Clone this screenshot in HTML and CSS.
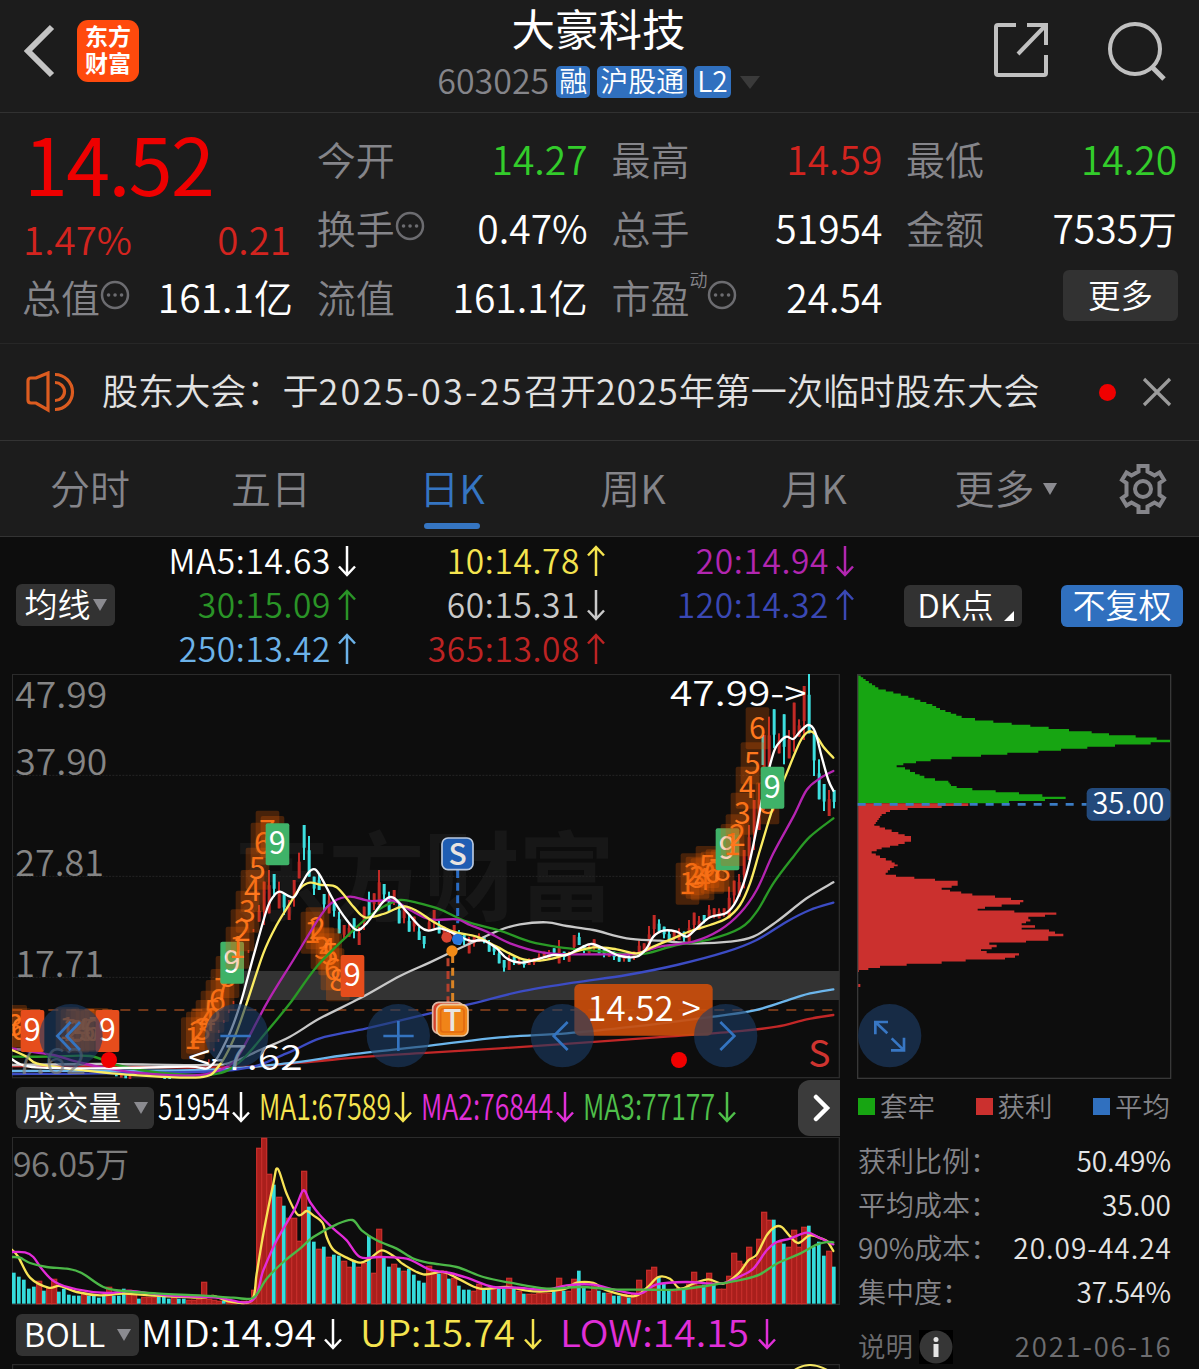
FILE: index.html
```html
<!DOCTYPE html>
<html lang="zh-CN">
<head>
    <meta charset="UTF-8">
    <title>大豪科技 603025</title>
    <link rel="stylesheet" href="styles.css">
</head>
<body>
    <svg class="defs" width="0" height="0">
        <symbol id="down" viewBox="0 0 20 32"><path d="M10 1v29M2 21.500l8 8.500 8-8.500"/></symbol>
        <symbol id="up" viewBox="0 0 20 32"><path d="M10 31V2M2 10.500L10 2l8 8.500"/></symbol>
        <symbol id="more" viewBox="0 0 30 30"><circle cx="15" cy="15" r="13"/><path d="M8.500 15h.1M15 15h.1M21.500 15h.1" stroke-width="3.500" stroke-linecap="round"/></symbol>
    </svg>

    <header class="topbar">
        <div class="topbar-left">
            <svg class="back" width="32" height="54" viewBox="0 0 32 54"><path d="M28 3L4 27l24 24"/></svg>
            <div class="logo"><span>东方</span><span>财富</span></div>
        </div>
        <div class="stock">
            <h1>大豪科技</h1>
            <div class="stock-sub">
                <span class="code">603025</span>
                <span class="tag">融</span>
                <span class="tag">沪股通</span>
                <span class="tag">L2</span>
                <span class="caret caret-dark"></span>
            </div>
        </div>
        <div class="topbar-right">
            <svg width="56" height="56" viewBox="0 0 56 56"><path d="M23 3H5a2 2 0 0 0-2 2v46a2 2 0 0 0 2 2h46a2 2 0 0 0 2-2V33M34 3h19v20M53 3L25 32"/></svg>
            <svg width="60" height="60" viewBox="0 0 60 60"><circle cx="28" cy="27" r="25"/><path d="M45 45l12 12" stroke-width="5"/></svg>
        </div>
    </header>

    <section class="quote">
        <div class="price">14.52</div>
        <div class="cell"><span>今开</span><b class="green">14.27</b></div>
        <div class="cell"><span>最高</span><b class="red">14.59</b></div>
        <div class="cell"><span>最低</span><b class="green">14.20</b></div>

        <div class="cell change"><b class="red">1.47%</b><b class="red">0.21</b></div>
        <div class="cell"><span>换手<svg class="dots"><use href="#more"/></svg></span><b>0.47%</b></div>
        <div class="cell"><span>总手</span><b>51954</b></div>
        <div class="cell"><span>金额</span><b>7535万</b></div>

        <div class="cell"><span>总值<svg class="dots"><use href="#more"/></svg></span><b>161.1亿</b></div>
        <div class="cell"><span>流值</span><b>161.1亿</b></div>
        <div class="cell"><span>市盈<sup>动</sup><svg class="dots"><use href="#more"/></svg></span><b>24.54</b></div>
        <div class="cell cell-more"><button class="more-btn">更多</button></div>
    </section>

    <section class="notice">
        <svg class="speaker" width="50" height="42" viewBox="0 0 50 42"><path d="M3 10q0-3 3-3h5L23 2v37L11 32H6q-3 0-3-3zM30 11.500a9.500 9 0 0 1 0 18M30 3.500a17.500 17.500 0 0 1 0 35"/></svg>
        <p>股东大会：于<span class="notice-date">2025-03-25</span>召开<span class="notice-year">2025</span>年第一次临时股东大会</p>
        <i class="dot"></i>
        <svg class="close" width="30" height="30" viewBox="0 0 30 30"><path d="M2 2l26 26M28 2L2 28"/></svg>
    </section>

    <nav class="tabs">
        <a>分时</a>
        <a>五日</a>
        <a class="active">日K</a>
        <a>周K</a>
        <a>月K</a>
        <a class="tab-more">更多<span class="caret caret-small"></span></a>
        <svg class="gear" width="50" height="50" viewBox="0 0 50 50"><path d="M20.500 2h9v5.500l7 4 5-3 4.500 7.500-4.500 3v12l4.500 3-4.500 7.500-5-3-7 4V48h-9v-5.500l-7-4-5 3L4 34l4.500-3V19L4 16l4.500-7.500 5 3 7-4z"/><circle cx="25" cy="25" r="8"/></svg>
    </nav>

    <section class="ma">
        <button class="pill">均线<span class="caret caret-pill"></span></button>
        <div class="ma-grid">
            <span class="c-white">MA5:14.63<svg class="arrow"><use href="#down"/></svg></span>
            <span class="c-yellow">10:14.78<svg class="arrow"><use href="#up"/></svg></span>
            <span class="c-purple">20:14.94<svg class="arrow"><use href="#down"/></svg></span>
            <span class="c-green">30:15.09<svg class="arrow"><use href="#up"/></svg></span>
            <span class="c-gray">60:15.31<svg class="arrow"><use href="#down"/></svg></span>
            <span class="c-blue">120:14.32<svg class="arrow"><use href="#up"/></svg></span>
            <span class="c-sky">250:13.42<svg class="arrow"><use href="#up"/></svg></span>
            <span class="c-red">365:13.08<svg class="arrow"><use href="#up"/></svg></span>
        </div>
        <button class="pill pill-dk">DK点<svg width="12" height="12" viewBox="0 0 12 12"><path d="M11 1v10H1z"/></svg></button>
        <button class="pill pill-blue">不复权</button>
    </section>

    <main class="charts">
        <div class="left">
            <!-- chart units are thirds of a pixel -->
            <svg class="kline" width="828" height="405" viewBox="36 12 2484 1215">
                <text class="watermark" x="700" y="730" textLength="1145">东方财富</text>
                <rect class="frame" x="37" y="13" width="2481" height="1210"/>
                <path class="grid-line" d="M37 316H2518M37 619H2518M37 922H2518"/>
                <rect x="730" y="903" width="1788" height="87" fill="#333"/>
                <path class="cost-line" d="M37 1020H2518"/>
                <g id="candles"></g>
                <g id="chips"></g>
                <g id="maLines"></g>
                <g class="axis">
                    <text x="46" y="115" textLength="276" lengthAdjust="spacingAndGlyphs">47.99</text>
                    <text x="46" y="314" textLength="276" lengthAdjust="spacingAndGlyphs">37.90</text>
                    <text x="46" y="619" textLength="266" lengthAdjust="spacingAndGlyphs">27.81</text>
                    <text x="46" y="921" textLength="266" lengthAdjust="spacingAndGlyphs">17.71</text>
                    <text x="46" y="1213" textLength="212" lengthAdjust="spacingAndGlyphs" opacity=".75">7.62</text>
                </g>
                <g id="nines"></g>
                <g class="trade">
                    <path d="M1373 600V760" stroke="#2a6cc4"/>
                    <path d="M1344 865V1000" stroke="#b5402c"/>
                    <path d="M1358 855V1000" stroke="#d98324"/>
                    <circle cx="1340" cy="802" r="16" fill="#d84432"/>
                    <circle cx="1373" cy="808" r="17" fill="#2776dc"/>
                    <circle cx="1356" cy="843" r="17" fill="#f08a16"/>
                    <rect x="1326" y="504" width="93" height="95" rx="18" fill="#1f5db3" stroke="#b9c8de" stroke-width="5"/>
                    <text x="1373" y="584">S</text>
                    <rect x="1298" y="997" width="92" height="93" rx="18" fill="#d4422c" stroke="#ddb7a6" stroke-width="5"/>
                    <rect x="1310" y="1004" width="94" height="94" rx="18" fill="#f08418" stroke="#ecc79c" stroke-width="5"/>
                    <rect x="1322" y="1016" width="70" height="70" rx="8" fill="none" stroke="#e26a10" stroke-width="5"/>
                    <text x="1357" y="1084">T</text>
                </g>
                <rect x="1723" y="942" width="415" height="155" rx="16" fill="#c94e0c" fill-opacity=".93"/>
                <text class="label" x="1762" y="1052" textLength="340" lengthAdjust="spacingAndGlyphs">14.52 &gt;</text>
                <text class="label" x="564" y="1200" textLength="344" lengthAdjust="spacingAndGlyphs">&lt;-7.62</text>
                <text class="label" x="2010" y="108" textLength="410" lengthAdjust="spacingAndGlyphs">47.99-&gt;</text>
                <g class="round-btn">
                    <circle cx="213" cy="1097" r="95"/>
                    <circle cx="710" cy="1097" r="95"/>
                    <circle cx="1195" cy="1097" r="95"/>
                    <circle cx="1687" cy="1097" r="95"/>
                    <circle cx="2177" cy="1097" r="95"/>
                    <path d="M212 1056l-40 42 40 42M240 1056l-40 42 40 42M661 1098h91M1150 1098h91M1195 1053v90M1703 1056l-42 42 42 42M2161 1056l42 42-42 42"/>
                </g>
                <circle cx="327" cy="1170" r="24" fill="#f00000"/>
                <circle cx="2037" cy="1170" r="24" fill="#f00000"/>
                <text class="s-mark" x="2425" y="1191">S</text>
            </svg>

            <div class="indicator">
                <button class="pill pill-vol">成交量<span class="caret caret-pill"></span></button>
                <svg class="values" width="600" height="42" viewBox="0 0 600 42" font-size="36">
                    <g class="c-white"><text x="3" y="35" textLength="72" lengthAdjust="spacingAndGlyphs">51954</text><use href="#down" x="76" y="5" width="20" height="34"/></g>
                    <g class="c-yellow"><text x="104" y="35" textLength="132" lengthAdjust="spacingAndGlyphs">MA1:67589</text><use href="#down" x="238" y="5" width="20" height="34"/></g>
                    <g class="c-magenta"><text x="266" y="35" textLength="132" lengthAdjust="spacingAndGlyphs">MA2:76844</text><use href="#down" x="400" y="5" width="20" height="34"/></g>
                    <g class="c-lime"><text x="428" y="35" textLength="132" lengthAdjust="spacingAndGlyphs">MA3:77177</text><use href="#down" x="562" y="5" width="20" height="34"/></g>
                </svg>
                <button class="next"><svg width="18" height="28" viewBox="0 0 18 28"><path d="M3 3l11 11L3 25"/></svg></button>
            </div>

            <svg class="volume" width="828" height="168" viewBox="36 170 2484 504">
                <rect class="frame" x="37" y="171" width="2481" height="501"/>
                <text class="vol-max" x="38" y="290" textLength="350">96.05万</text>
                <g id="volBars"></g>
                <g id="volLines"></g>
            </svg>

            <div class="indicator indicator-boll">
                <button class="pill pill-boll">BOLL<span class="caret caret-pill"></span></button>
                <svg class="values" width="680" height="42" viewBox="0 0 680 42" font-size="37">
                    <g class="c-white"><text x="1" y="34" textLength="175" lengthAdjust="spacingAndGlyphs">MID:14.94</text><use href="#down" x="183" y="4" width="20" height="34"/></g>
                    <g class="c-yellow"><text x="220" y="34" textLength="155" lengthAdjust="spacingAndGlyphs">UP:15.74</text><use href="#down" x="383" y="4" width="20" height="34"/></g>
                    <g class="c-magenta"><text x="420" y="34" textLength="189" lengthAdjust="spacingAndGlyphs">LOW:14.15</text><use href="#down" x="617" y="4" width="20" height="34"/></g>
                </svg>
            </div>
            <svg class="boll" width="828" height="7" viewBox="0 0 828 7"><path class="boll-frame" d="M.5 7V.5H827.500V7"/><path d="M781 7Q797 -5 817 7" fill="none" stroke="#f5e663" stroke-width="2"/></svg>
        </div>

        <aside class="right">
            <svg class="cost" width="315" height="405" viewBox="36 27 945 1215">
                <path id="costUp" fill="#17a512"/>
                <path id="costDown" fill="#cb302e"/>
                <rect x="38" y="957" width="8" height="9" fill="#cb302e"/>
                <rect class="cost-frame" x="38" y="29" width="939" height="1211"/>
                <path d="M38 418H725" stroke="#3b7cc4" stroke-width="8" stroke-dasharray="24 24"/>
                <rect x="725" y="369" width="251" height="98" rx="16" fill="#234a7c"/>
                <text x="742" y="448" textLength="216">35.00</text>
                <circle cx="134" cy="1112" r="95" fill="#172b45"/>
                <path class="expand" d="M91 1108V1071H129M91 1071L127 1105M138 1156H177V1118M177 1156L140 1120"/>
            </svg>
            <div class="legend">
                <span><i class="sq sq-green"></i>套牢</span>
                <span><i class="sq sq-red"></i>获利</span>
                <span><i class="sq sq-blue"></i>平均</span>
            </div>
            <dl class="stats">
                <div><dt>获利比例：</dt><dd>50.49%</dd></div>
                <div><dt>平均成本：</dt><dd>35.00</dd></div>
                <div><dt>90%成本：</dt><dd class="range">20.09-44.24</dd></div>
                <div><dt>集中度：</dt><dd>37.54%</dd></div>
            </dl>
            <div class="footnote">
                <span>说明</span>
                <svg width="34" height="34" viewBox="0 0 34 34"><rect width="34" height="34" fill="#000"/><circle cx="17" cy="17" r="16.500" fill="#363636"/><path d="M17 14v13" stroke="#e6e6e6" stroke-width="5"/><circle cx="17" cy="9.500" r="2.500" fill="#e6e6e6"/></svg>
                <span class="date">2021-06-16</span>
            </div>
        </aside>
    </main>

    <script src="script.js"></script>
</body>
</html>
```
FILE: styles.css
```css
* {
    margin: 0;
    padding: 0;
    box-sizing: border-box;
}

body {
    width: 1199px;
    height: 1369px;
    overflow: hidden;
    background: #0d0d0d;
    color: #fff;
    font-family: "Noto Sans CJK SC", "Noto Sans", sans-serif;
    font-weight: 350;
}

button {
    border: none;
    color: #fff;
    font: inherit;
}

svg {
    display: block;
    flex: none;
}

.defs {
    position: absolute;
}

.red { color: #d3241f; }
.green { color: #33cc2b; }
.c-white { color: #fff; }
.c-yellow { color: #f5e44f; }
.c-purple { color: #b226b0; }
.c-green { color: #2a9427; }
.c-gray { color: #c9c9c9; }
.c-blue { color: #3a48b4; }
.c-sky { color: #6cb2e8; }
.c-red { color: #bd2323; }
.c-magenta { color: #e02fd8; }
.c-lime { color: #4fc04a; }

.caret {
    display: inline-block;
    border-left: 7px solid transparent;
    border-right: 7px solid transparent;
    border-top: 12px solid #8b8b90;
}

.caret-dark {
    margin-left: 2px;
    border-left-width: 10px;
    border-right-width: 10px;
    border-top: 13px solid #3a3a3a;
}

.caret-small {
    margin-left: 8px;
}

/* top bar */
.topbar {
    display: grid;
    grid-template-columns: 1fr auto 1fr;
    height: 113px;
    padding: 0 32px 0 24px;
    background: #1c1c1c;
    border-bottom: 1px solid #313131;
}

.topbar-left {
    display: flex;
    gap: 21px;
    padding-top: 20px;
}

.back {
    margin-top: 4px;
    fill: none;
    stroke: #c4c4c4;
    stroke-width: 6;
}

.logo {
    display: flex;
    flex-direction: column;
    align-items: center;
    justify-content: center;
    width: 62px;
    height: 62px;
    padding-bottom: 5px;
    border-radius: 11px;
    background: #ff4a0d;
    font-size: 23px;
    font-weight: 700;
    line-height: 27px;
}

.stock {
    display: flex;
    flex-direction: column;
    align-items: center;
    padding-left: 6px;
}

.stock h1 {
    height: 64px;
    font-size: 43.5px;
    font-weight: 400;
    line-height: 56px;
}

.stock-sub {
    display: flex;
    align-items: center;
    gap: 7px;
    height: 36px;
}

.code {
    margin-top: -5px;
    font-size: 34px;
    color: #85858a;
    line-height: 36px;
}

.tag {
    height: 32px;
    padding: 0 3px;
    border-radius: 5px;
    background: #3070bf;
    font-size: 28px;
    line-height: 29px;
}

.topbar-right {
    display: flex;
    justify-content: flex-end;
    gap: 58px;
    padding-top: 22px;
    fill: none;
    stroke: #c0c0c0;
    stroke-width: 4;
}

/* quote */
.quote {
    display: grid;
    grid-template-columns: repeat(4, 271px);
    grid-auto-rows: 69px;
    column-gap: 23.7px;
    height: 231px;
    padding: 10px 22px 0 22px;
    background: #1c1c1c;
    border-bottom: 1px solid #272727;
}

.price {
    padding: 4px 0 0 2px;
    font-size: 79px;
    font-weight: 400;
    line-height: 69px;
    letter-spacing: -1.6px;
    color: #ee0000;
}

.cell {
    display: flex;
    justify-content: space-between;
    align-items: center;
    font-size: 39px;
    line-height: 60px;
}

.cell span {
    display: flex;
    align-items: center;
    color: #85858a;
}

.cell b {
    font-weight: inherit;
}

.change {
    padding: 22px 2px 0 1px;
    font-size: 38.5px;
}

.dots {
    width: 30px;
    height: 30px;
    margin-bottom: 1px;
    fill: none;
    stroke: #6c6c70;
    stroke-width: 2.5;
}

.cell sup {
    align-self: flex-start;
    margin: -2px 0 0 0;
    font-size: 18px;
    line-height: 30px;
}

.cell-more {
    justify-content: flex-end;
}

.more-btn {
    width: 115px;
    height: 51px;
    margin: 0 -1px 0 0;
    padding-bottom: 4px;
    border-radius: 6px;
    background: #323232;
    font-size: 32.5px;
    line-height: 45px;
}

/* notice */
.notice {
    display: flex;
    align-items: center;
    height: 97px;
    padding: 0 27px 0 25px;
    background: #1c1c1c;
    border-bottom: 1px solid #333;
}

.speaker {
    fill: none;
    stroke: #dc5c20;
    stroke-width: 3.2;
}

.notice p {
    flex: 1;
    margin: -6px 0 0 27px;
    font-size: 36.1px;
    color: #e2e2e2;
    white-space: nowrap;
}

.notice-date {
    letter-spacing: 2.2px;
}

.notice-year {
    letter-spacing: .9px;
}

.dot {
    width: 17px;
    height: 17px;
    margin-right: 26px;
    border-radius: 50%;
    background: #f00000;
}

.close {
    stroke: #9b9b9b;
    stroke-width: 3.2;
}

/* tabs */
.tabs {
    display: flex;
    align-items: center;
    height: 96px;
    background: #1c1c1c;
    border-bottom: 1px solid #333;
}

.tabs a {
    display: flex;
    flex-direction: column;
    align-items: center;
    width: 181px;
    height: 95px;
    padding: 16px 1px 0 0;
    font-size: 40px;
    line-height: 60px;
    color: #85858a;
}

.tabs .active {
    color: #3575c2;
}

.active::after {
    content: "";
    width: 56px;
    height: 6px;
    margin-top: 6px;
    border-radius: 3px;
    background: #3575c2;
}

.tabs .tab-more {
    flex-direction: row;
    justify-content: center;
    align-items: flex-start;
    width: 201px;
    padding-right: 0;
}

.tab-more .caret {
    margin-top: 26px;
}

.gear {
    margin-left: 12px;
    fill: none;
    stroke: #85858a;
    stroke-width: 4;
}

/* moving averages */
.ma {
    display: flex;
    height: 137px;
    padding: 2px 16px 0;
}

.ma-grid {
    display: grid;
    grid-template-columns: 237px 249px 249px;
    grid-auto-rows: 44px;
    margin: -1px 49px 0 5px;
}

.ma-grid span {
    display: flex;
    justify-content: flex-end;
    align-items: center;
    font-size: 33.5px;
    line-height: 44px;
    letter-spacing: .6px;
}

.arrow {
    width: 20px;
    height: 32px;
    margin: 2px 0 0 6px;
}

.arrow, .values use {
    fill: none;
    stroke: currentColor;
    stroke-width: 2.5;
}

.pill {
    display: flex;
    align-items: center;
    justify-content: center;
    width: 99px;
    height: 42px;
    padding-bottom: 4px;
    border-radius: 6px;
    background: #323232;
    font-size: 33px;
    line-height: 38px;
    white-space: nowrap;
}

.ma .pill {
    margin-top: 45px;
}

.ma .pill-dk {
    width: 118px;
    margin-top: 46px;
    margin-right: 39px;
}

.pill-dk svg {
    margin: 23px -6px 0 9px;
    fill: #fff;
}

.ma .pill-blue {
    width: 122px;
    margin-top: 46px;
    background: #3070bf;
}

.caret-pill {
    margin: 4px 0 0 2px;
}

/* charts */
.charts {
    display: flex;
    gap: 17px;
    padding-left: 12px;
}

.left {
    width: 828px;
}

svg text {
    fill: currentColor;
}

.frame, .boll-frame {
    fill: none;
    stroke: #2b2b2b;
    stroke-width: 4;
}

.boll-frame {
    stroke-width: 1.5;
}

.grid-line {
    stroke: #252525;
    stroke-width: 3;
    stroke-dasharray: 6 4;
}

.kline .watermark {
    font-size: 290px;
    font-weight: 700;
    fill: #171717;
}

.kline .axis text {
    font-size: 107px;
    fill: #858585;
}

.cost-line {
    stroke: #93451c;
    stroke-width: 4;
    stroke-dasharray: 30 24;
}

.kline .label {
    font-size: 104px;
}

.chip text {
    font-size: 90px;
    font-weight: 400;
    text-anchor: middle;
    fill: #ff781e;
}

.chip rect {
    fill: #e65c05;
    fill-opacity: .27;
}

.nine text {
    font-size: 92px;
    font-weight: 400;
    text-anchor: middle;
}

.trade path {
    stroke-width: 9;
    stroke-dasharray: 24 14;
}

.trade text {
    font-size: 90px;
    font-weight: 500;
    text-anchor: middle;
    fill: #e9e4e0;
}

.round-btn circle {
    fill: #1b3c66;
    fill-opacity: .6;
}

.round-btn path {
    fill: none;
    stroke: #3474c0;
    stroke-width: 8;
}

.kline .s-mark {
    font-size: 112px;
    font-weight: 400;
    fill: #cf3430;
}

.ma-line {
    fill: none;
    stroke-width: 7;
    stroke-linecap: round;
}

.indicator {
    display: flex;
    align-items: center;
    height: 58px;
    padding-left: 4px;
}

.pill-vol {
    width: 138px;
}

.pill-vol .caret, .pill-boll .caret {
    margin-left: 12px;
}

.indicator .values {
    margin: -5px auto 0 1px;
}

.next {
    display: flex;
    align-items: center;
    justify-content: center;
    width: 42px;
    height: 56px;
    border-radius: 12px 0 0 12px;
    background: #3b3b3b;
}

.next svg {
    margin-left: 5px;
}

.next path {
    fill: none;
    stroke: #fff;
    stroke-width: 4.5;
    stroke-linecap: round;
}

.volume .vol-max {
    font-size: 103px;
    fill: #7d7d7d;
}

.indicator-boll {
    height: 59px;
}

.pill-boll {
    width: 123px;
    margin-top: 1px;
}

.indicator-boll .values {
    margin-top: -2px;
}

/* cost distribution */
.right {
    width: 315px;
}

.cost-frame {
    fill: none;
    stroke: #383838;
    stroke-width: 4;
}

.cost text {
    font-size: 88px;
}

.expand {
    fill: none;
    stroke: #3877c4;
    stroke-width: 8;
}

.legend {
    display: flex;
    justify-content: space-between;
    height: 60px;
    padding: 0 2px 0 1px;
    font-size: 27.5px;
    line-height: 50px;
    color: #85858a;
}

.legend span {
    display: flex;
    align-items: center;
    height: 51px;
}

.sq {
    width: 17px;
    height: 17px;
    margin: 3px 5px 0 0;
}

.sq-green { background: #17a512; }
.sq-red { background: #cb302e; }
.sq-blue { background: #3070bf; }

.stats div {
    display: flex;
    justify-content: space-between;
    height: 43.6px;
    padding: 0 1px;
    font-size: 28px;
    line-height: 42px;
}

.stats dt {
    color: #85858a;
}

.stats dd {
    color: #e4e4e4;
}

.stats .range {
    letter-spacing: 1px;
    margin-right: -1px;
}

.footnote {
    display: flex;
    align-items: center;
    height: 58px;
    padding: 6px 1px 0;
    gap: 6px;
    font-size: 27.5px;
    color: #6d6d70;
}

.footnote svg {
    margin-top: 3px;
}

.date {
    margin: 0 -1.5px 0 auto;
    letter-spacing: 1.8px;
}
```
FILE: script.js
```javascript
const NS = 'http://www.w3.org/2000/svg';
const CYAN = '#3ddfdf';
const RED = '#c22a26';

function add(parent, name, attrs, text) {
    const el = document.createElementNS(NS, name);
    for (const key in attrs) el.setAttribute(key, attrs[key]);
    if (text) el.textContent = text;
    parent.appendChild(el);
    return el;
}

// smooth curve through a flat list of x,y pairs
function curve(list) {
    const p = [];
    for (let i = 0; i < list.length; i += 2) p.push([list[i], list[i + 1]]);
    let d = `M${p[0]}`;
    for (let i = 0; i < p.length - 1; i++) {
        const a = p[i - 1] || p[i], b = p[i], c = p[i + 1], e = p[i + 2] || c;
        d += `C${b[0] + (c[0] - a[0]) / 6} ${b[1] + (c[1] - a[1]) / 6} ${c[0] - (e[0] - b[0]) / 6} ${c[1] - (e[1] - b[1]) / 6} ${c}`;
    }
    return d;
}

// candles: high-low and direction, starting at bar 49
const candles = `705-755r 635-765r 600-730r 612-680c 635-715r 670-735c 690-750r 630-710r 548-625r 465-570c 498-620c
620-675c 615-660c 672-720c 670-730r 690-740c 725-790c 765-810r 760-800r 745-805c 770-825r 710-780r 665-745c 670-720r
600-705r 642-690c 665-725c 660-705r 700-760c 715-760r 735-785c 740-785r 770-810c 798-835c 745-780r 720-775r 750-790c
770-810r 785-815r 765-820r 780-825c 790-825c 800-850r 800-830r 790-815r 800-820c 810-845c 825-855c 835-880c 870-905c
855-900r 860-885c 865-885r 870-893c 865-885r 865-885r 850-875r 845-865r 840-870r 835-855c 810-880r 845-870c 845-875r
795-850r 788-825c 825-850c 820-850r 808-845r 830-850c 840-862c 840-860r 845-870c 855-875c 850-875r 855-875c 845-870r
812-855r 820-850r 768-840r 735-800r 748-785c 770-805c 780-815c 785-815r 775-810r 785-815c 750-820r 728-785r 738-780r
735-760c 705-745r 715-745r 715-745r 715-740r 650-745r 632-700r 612-680r 540-655r 465-570r 390-540r 340-480r 195-420r
140-300r 118-235c 190-250r 133-283c 180-265r 98-245r 148-200r 48-210r 12-190c 185-318c 268-388c 342-423c 360-438r
360-415c`.split(/\s+/);

const candleBox = document.getElementById('candles');
candles.forEach((item, n) => {
    const [top, bottom] = item.slice(0, -1).split('-').map(Number);
    const color = item.endsWith('c') ? CYAN : RED;
    const x = 42 + 15 * (n + 49);
    const h = bottom - top;
    const shift = n % 2 ? 0 : h * .35;
    add(candleBox, 'rect', {x: x - 3, y: top, width: 6, height: h, fill: color});
    add(candleBox, 'rect', {x: x - 4, y: top + shift, width: 9, height: h * .65, fill: color});
});
add(candleBox, 'path', {d: 'M2288 195V285', stroke: CYAN, 'stroke-width': 7});
[[345, 1210, CYAN], [360, 1214, RED], [373, 1216, CYAN], [386, 1218, RED], [490, 1218, CYAN], [505, 1220, CYAN]].forEach(([x, y, color]) => {
    add(candleBox, 'rect', {x, y, width: 8, height: 9, fill: color});
});
[[760, 777], [745, 840], [700, 993], [686, 1020], [671, 1050], [656, 1080], [655, 1107], [641, 1135], [626, 1168]].forEach(([x, y]) => {
    add(candleBox, 'rect', {x: x - 2, y, width: 5, height: 9, fill: RED});
});

const maLines = {
    '#c22727': [36, 1188, 300, 1190, 700, 1192, 900, 1178, 1100, 1160, 1290, 1148, 1500, 1135, 1750, 1118, 2000, 1100, 2200, 1085, 2330, 1070, 2420, 1048, 2500, 1035],
    '#6cb6ec': [36, 1203, 600, 1200, 860, 1180, 1040, 1155, 1290, 1127, 1500, 1102, 1700, 1090, 1900, 1070, 2100, 1045, 2260, 1022, 2380, 985, 2430, 970, 2500, 958],
    '#3c4cc4': [36, 1212, 300, 1210, 700, 1200, 860, 1150, 960, 1105, 1100, 1075, 1290, 1030, 1420, 1000, 1560, 965, 1720, 938, 1880, 915, 2030, 885, 2180, 845, 2270, 810, 2360, 755, 2430, 720, 2500, 698],
    '#c8c8c8': [36, 1185, 300, 1182, 620, 1185, 700, 1175, 780, 1140, 870, 1100, 960, 1045, 1080, 985, 1200, 918, 1290, 877, 1400, 825, 1500, 780, 1560, 763, 1640, 757, 1700, 768, 1780, 780, 1880, 805, 1980, 812, 2080, 820, 2190, 815, 2260, 800, 2330, 755, 2420, 685, 2500, 637],
    '#2a9a26': [36, 1160, 150, 1160, 270, 1158, 350, 1185, 480, 1208, 640, 1213, 720, 1175, 800, 1085, 870, 1000, 950, 890, 1050, 790, 1100, 745, 1150, 710, 1200, 690, 1250, 698, 1320, 718, 1400, 755, 1500, 782, 1590, 815, 1680, 832, 1780, 842, 1880, 852, 1940, 850, 2030, 825, 2130, 808, 2220, 775, 2270, 725, 2320, 640, 2380, 560, 2430, 500, 2500, 445],
    '#b524b2': [36, 1135, 90, 1145, 160, 1155, 230, 1175, 320, 1195, 450, 1212, 600, 1215, 680, 1190, 720, 1150, 800, 1000, 880, 870, 960, 740, 1000, 695, 1050, 680, 1110, 693, 1180, 692, 1230, 720, 1290, 748, 1370, 748, 1410, 765, 1460, 785, 1530, 820, 1630, 848, 1720, 853, 1820, 853, 1900, 852, 1980, 830, 2080, 815, 2160, 780, 2220, 730, 2270, 660, 2320, 550, 2380, 440, 2420, 360, 2460, 325, 2500, 303],
    '#fbec62': [36, 1140, 80, 1160, 110, 1180, 200, 1195, 400, 1215, 600, 1222, 655, 1190, 700, 1110, 740, 1000, 790, 850, 830, 765, 870, 700, 900, 655, 930, 638, 965, 645, 1010, 652, 1060, 710, 1095, 742, 1150, 732, 1190, 715, 1220, 710, 1260, 728, 1300, 755, 1360, 785, 1430, 800, 1490, 830, 1560, 865, 1610, 872, 1660, 865, 1710, 850, 1780, 832, 1850, 838, 1910, 850, 1960, 830, 2020, 805, 2080, 780, 2130, 765, 2180, 745, 2220, 705, 2250, 640, 2280, 540, 2320, 410, 2360, 310, 2400, 215, 2425, 185, 2445, 192, 2470, 230, 2500, 263],
    '#ffffff': [36, 1168, 60, 1182, 110, 1192, 300, 1195, 560, 1190, 630, 1190, 680, 1110, 720, 1005, 760, 860, 800, 720, 820, 680, 840, 665, 880, 682, 900, 650, 925, 608, 945, 598, 965, 625, 1000, 690, 1040, 750, 1070, 780, 1100, 760, 1150, 695, 1180, 683, 1220, 725, 1260, 770, 1285, 782, 1320, 775, 1360, 790, 1410, 812, 1450, 812, 1490, 835, 1520, 865, 1560, 878, 1610, 868, 1660, 855, 1700, 855, 1740, 835, 1775, 822, 1820, 840, 1860, 858, 1910, 860, 1940, 835, 1960, 800, 1990, 782, 2030, 785, 2060, 800, 2090, 775, 2130, 742, 2180, 728, 2210, 690, 2240, 610, 2265, 500, 2290, 370, 2320, 250, 2340, 215, 2360, 200, 2380, 207, 2400, 185, 2425, 165, 2445, 185, 2465, 260, 2485, 330, 2500, 362]
};
const lineBox = document.getElementById('maLines');
for (const color in maLines) add(lineBox, 'path', {class: 'ma-line', d: curve(maLines[color]), stroke: color});

// sequence counts: digit, left, top; a 9 closes a sequence and may be crossed by the next one
const counts = [
    [1, 543, 1042], [2, 558, 1025], [3, 573, 1015], [4, 587, 990], [5, 602, 962], [6, 617, 930], [7, 632, 897], [8, 647, 858], [9, 661, 815],
    [1, 677, 770], [2, 692, 718], [3, 707, 662], [4, 722, 600], [5, 737, 533], [6, 752, 458], [7, 767, 422], [8, 782, 438],
    [1, 902, 725], [2, 917, 712], [3, 932, 772], [4, 947, 775], [5, 955, 790], [6, 962, 835], [8, 978, 868],
    [3, 10, 1005], [6, 22, 1015],
    [1, 167, 1012], [2, 182, 1018], [3, 197, 1022], [4, 212, 1016], [5, 227, 1018], [6, 242, 1020], [7, 255, 1014],
    [1, 2027, 578], [2, 2042, 550], [3, 2057, 560], [4, 2072, 565], [5, 2087, 528], [6, 2102, 545], [7, 2117, 538], [8, 2132, 540], [9, 2147, 475],
    [1, 2162, 462], [2, 2177, 433], [3, 2192, 368], [4, 2207, 290], [5, 2222, 217], [6, 2237, 112], [8, 2267, 337]
];
const nines = [
    [797, 460, '#3fb268'], [2282, 290, '#3fb268'],
    [62, 1020, '#e64d1c'], [287, 1020, '#e64d1c'], [1022, 855, '#e64d1c']
];
function addNine(box, x, y, fill) {
    const g = add(box, 'g', {class: 'nine'});
    add(g, 'rect', {x, y, width: 71, height: 126, rx: 6, fill});
    add(g, 'text', {x: x + 35, y: y + 93}, '9');
}
const chipBox = document.getElementById('chips');
counts.forEach(([digit, x, y]) => {
    if (digit === 9) {
        addNine(chipBox, x, y, '#3fb268');
        return;
    }
    const g = add(chipBox, 'g', {class: 'chip'});
    add(g, 'rect', {x, y, width: 71, height: 126, rx: 6});
    add(g, 'text', {x: x + 35, y: y + 94}, String(digit));
});
const nineBox = document.getElementById('nines');
nines.forEach(([x, y, fill]) => addNine(nineBox, x, y, fill));

// volume bars, height in px
const volumes = `31c 27c 24c 15c 17c 23r 13c 16r 25r 12c 15c 9c 8c 8c 11r 8c 8c 6c 8c 17r 8c 8c 15c 14r 10r 5c 7r 7r 7r 7c
7c 5c 7r 5c 5c 4r 4r 5r 22r 5r 4r 3r 3c 2r 2r 2c 3r 3r 14r 156r 166r 130r 119c 107r 98c 86r 86r 63r 133r 97c 62c 55r
57c 47r 49c 48c 43r 37r 43c 37r 41r 68c 31r 75r 46c 37c 40r 36c 33r 35c 29c 23c 21c 38r 32r 30c 33r 25c 26r 18c 14c
14c 13r 20r 15c 15c 15r 16c 16c 26r 17c 13r 10c 10r 10r 11r 11r 11r 13c 26r 13c 13r 25r 33c 17c 13r 18r 13c 11c 11r
8c 8c 10r 6c 10r 24r 15r 34r 37r 27c 20c 14c 13r 16r 15c 20r 32r 19r 19c 31r 19c 15r 15r 28r 51r 43r 40r 57r 45r 65r
92r 84r 84c 62r 60c 57r 74r 57r 77r 78c 57c 62c 48c 53r 37c`.split(/\s+/);
const volBox = document.getElementById('volBars');
volumes.forEach((item, i) => {
    const h = parseInt(item) * 3;
    const x = 36 + 15 * i;
    if (item.endsWith('c')) {
        add(volBox, 'rect', {x, y: 670 - h, width: 11, height: h, fill: '#35dcdc'});
    } else {
        add(volBox, 'rect', {x: x - 1, y: 672 - h, width: 15, height: h - 2, fill: '#a91f1c', stroke: '#c42c29', 'stroke-width': 4});
    }
});

const volLines = {
    '#f8e356': [36, 508, 55, 530, 90, 592, 145, 622, 180, 617, 230, 635, 300, 645, 370, 640, 450, 645, 600, 652, 640, 647, 690, 664, 755, 660, 770, 580, 790, 460, 820, 310, 833, 265, 860, 340, 893, 403, 920, 392, 940, 405, 968, 428, 980, 470, 1000, 508, 1040, 532, 1080, 547, 1110, 535, 1145, 510, 1185, 530, 1210, 552, 1270, 582, 1330, 575, 1380, 598, 1440, 625, 1520, 620, 1600, 633, 1690, 627, 1730, 607, 1780, 608, 1820, 630, 1900, 648, 1940, 623, 1975, 590, 2010, 595, 2040, 625, 2080, 610, 2125, 597, 2170, 610, 2215, 580, 2245, 540, 2270, 523, 2300, 465, 2325, 440, 2345, 440, 2370, 468, 2395, 488, 2430, 465, 2465, 475, 2482, 483, 2500, 512],
    '#e32bd9': [36, 515, 75, 516, 100, 530, 125, 565, 165, 605, 230, 627, 320, 638, 390, 632, 500, 645, 650, 652, 755, 662, 790, 570, 830, 480, 885, 385, 910, 330, 930, 365, 960, 405, 1000, 445, 1040, 480, 1080, 530, 1140, 530, 1220, 535, 1290, 568, 1350, 578, 1400, 592, 1480, 620, 1550, 622, 1640, 628, 1700, 615, 1780, 613, 1850, 630, 1920, 640, 1970, 612, 2060, 605, 2160, 610, 2220, 588, 2260, 565, 2300, 510, 2330, 485, 2370, 475, 2420, 457, 2460, 473, 2500, 492],
    '#4cb848': [36, 530, 60, 532, 90, 548, 140, 560, 200, 565, 245, 578, 310, 620, 370, 632, 480, 640, 600, 645, 700, 652, 760, 652, 800, 595, 850, 545, 900, 505, 940, 470, 1010, 432, 1057, 419, 1085, 450, 1130, 480, 1190, 505, 1240, 535, 1290, 548, 1370, 560, 1450, 590, 1530, 607, 1640, 625, 1740, 620, 1840, 627, 1930, 628, 2040, 627, 2160, 610, 2230, 597, 2280, 582, 2330, 550, 2400, 520, 2450, 493, 2480, 485, 2500, 486]
};
const volLineBox = document.getElementById('volLines');
for (const color in volLines) add(volLineBox, 'path', {class: 'ma-line', d: curve(volLines[color]), stroke: color});

// cost distribution, stepped: y,x pairs
const trapped = [29, 40, 45, 62, 70, 100, 95, 190, 120, 262, 132, 285, 155, 350, 163, 390, 170, 445, 176, 500, 182, 556, 189, 611, 195, 672, 202, 740, 208, 792, 214, 872, 221, 935, 228, 976, 235, 917, 242, 810, 248, 727, 254, 648, 260, 580, 267, 487, 272, 408, 279, 320, 286, 257, 292, 213, 298, 175, 303, 155, 310, 180, 325, 210, 335, 238, 344, 270, 350, 310, 360, 318, 366, 335, 372, 382, 379, 452, 385, 522, 391, 592, 399, 662, 405, 600, 411, 492];
const profit = [420, 370, 426, 290, 432, 188, 438, 135, 450, 110, 480, 88, 490, 120, 505, 160, 516, 198, 527, 198, 540, 160, 550, 110, 562, 80, 575, 105, 590, 140, 601, 158, 612, 135, 627, 122, 632, 153, 638, 208, 645, 270, 650, 338, 660, 338, 665, 320, 671, 290, 677, 315, 688, 382, 695, 450, 702, 498, 708, 535, 715, 525, 722, 470, 729, 420, 734, 398, 739, 508, 746, 634, 752, 600, 758, 550, 767, 556, 777, 530, 785, 570, 791, 530, 796, 612, 803, 630, 810, 655, 817, 610, 824, 610, 830, 543, 835, 433, 843, 455, 850, 440, 855, 408, 861, 425, 868, 522, 875, 510, 881, 480, 886, 362, 893, 290, 899, 185, 906, 105, 912, 70, 918, 42];

function steps(list, start, end) {
    const rows = [];
    for (let i = 0; i < list.length; i += 2) {
        const y = list[i], x = list[i + 1];
        const dy = list[i + 2] - y;
        const n = dy > 9 ? Math.round(dy / 6.3) : 1;
        for (let k = 0; k < n; k++) rows.push([y + dy * k / n || y, x + (list[i + 3] - x) * k / n || x]);
    }
    let d = `M38 ${start}`;
    rows.forEach(([, x], i) => {
        const next = rows[i + 1] ? (rows[i][0] + rows[i + 1][0]) / 2 : end;
        d += `H${x}V${next}`;
    });
    return d + 'H38Z';
}
document.getElementById('costUp').setAttribute('d', steps(trapped, 27, 415));
document.getElementById('costDown').setAttribute('d', steps(profit, 415, 921));
```
